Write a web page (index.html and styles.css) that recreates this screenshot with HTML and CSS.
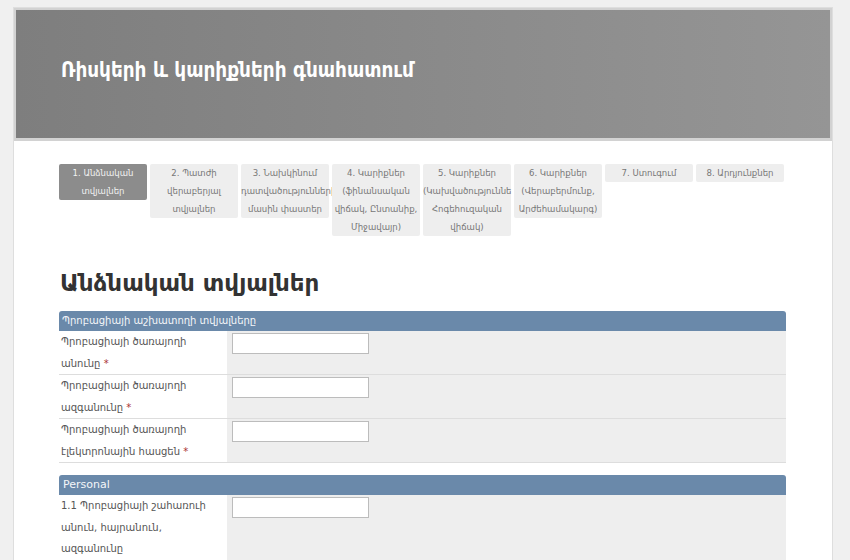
FILE: index.html
```html
<!DOCTYPE html>
<html lang="hy">
<head>
    <meta charset="UTF-8">
    <title>Ռիսկերի և կարիքների գնահատում</title>
    <link rel="stylesheet" href="styles.css">
</head>
<body>
    <div class="page">
        <div class="header">
            <h1>Ռիսկերի և կարիքների գնահատում</h1>
        </div>

        <div class="content">
            <ul class="steps">
                <li class="step active">1. Անձնական տվյալներ</li>
                <li class="step">2. Պատժի վերաբերյալ տվյալներ</li>
                <li class="step">3. Նախկինում դատվածությունների մասին փաստեր</li>
                <li class="step">4. Կարիքներ (ֆինանսական վիճակ, Ընտանիք, Միջավայր)</li>
                <li class="step">5. Կարիքներ (Կախվածություննե Հոգեհուզական վիճակ)</li>
                <li class="step">6. Կարիքներ (Վերաբերմունք, Արժեհամակարգ)</li>
                <li class="step">7. Ստուգում</li>
                <li class="step">8. Արդյունքներ</li>
            </ul>

            <h2 class="page-title">Անձնական տվյալներ</h2>

            <div class="group">
                <div class="group-title">Պրոբացիայի աշխատողի տվյալները</div>
                <div class="row">
                    <label class="row-label">Պրոբացիայի ծառայողի անունը <span class="req">*</span></label>
                    <div class="row-field"><input type="text" class="text-input"></div>
                </div>
                <div class="row">
                    <label class="row-label">Պրոբացիայի ծառայողի ազգանունը <span class="req">*</span></label>
                    <div class="row-field"><input type="text" class="text-input"></div>
                </div>
                <div class="row">
                    <label class="row-label">Պրոբացիայի ծառայողի էլեկտրոնային հասցեն <span class="req">*</span></label>
                    <div class="row-field"><input type="text" class="text-input"></div>
                </div>
            </div>

            <div class="group">
                <div class="group-title latin">Personal</div>
                <div class="row">
                    <label class="row-label">1.1 Պրոբացիայի շահառուի անուն, հայրանուն, ազգանունը</label>
                    <div class="row-field"><input type="text" class="text-input"></div>
                </div>
            </div>
        </div>
    </div>
</body>
</html>
```

FILE: styles.css
```css
body {
    margin: 0;
    background-color: #f0f0f0;
    font-family: 'DejaVu Sans', sans-serif;
    color: #555;
}

.page {
    width: 818px;
    margin: 7px 0 0 13px;
    background: #fff;
    border: 1px solid #dedede;
    min-height: 600px;
}

.header {
    height: 128px;
    border: 2px solid #d2d2d2;
    border-bottom-width: 3px;
    background: linear-gradient(to right, #7e7e7e, #959595);
    display: flex;
    align-items: center;
    padding-left: 45px;
}

.header h1 {
    margin: 0 0 8px 0;
    font-family: 'DejaVu Sans Condensed', 'DejaVu Sans', sans-serif;
    font-size: 20.5px;
    font-weight: bold;
    color: #fff;
}

.content {
    padding: 23px 46px 0 45px;
}

.steps {
    list-style: none;
    margin: 0;
    padding: 0;
    display: flex;
    align-items: flex-start;
    gap: 3px;
}

.step {
    width: 88px;
    flex: none;
    background: #eeeeee;
    color: #777;
    font-family: 'DejaVu Sans Condensed', 'DejaVu Sans', sans-serif;
    font-size: 9.5px;
    line-height: 18px;
    text-align: center;
    border-radius: 2px;
}

.step.active {
    background: #8c8c8c;
    color: #f2f2f2;
}

.page-title {
    margin: 32px 0 13px 1px;
    font-size: 23px;
    font-weight: bold;
    color: #333;
    line-height: 30px;
}

.group {
    margin-bottom: 12px;
}

.group-title {
    background: #6a89aa;
    color: #f4f6f9;
    font-size: 10px;
    line-height: 20px;
    height: 20px;
    padding-left: 3px;
    border-radius: 3px 3px 0 0;
}

.group-title.latin {
    font-size: 11px;
    padding-left: 4px;
}

.row {
    display: flex;
    border-bottom: 1px solid #dddddd;
}

.row-label {
    width: 166px;
    flex: none;
    padding-left: 2px;
    font-size: 10px;
    line-height: 21.5px;
    color: #555;
}

.req {
    color: #a33;
}

.row-field {
    flex: 1;
    background: #eeeeee;
    padding: 2px 5px;
}

.text-input {
    display: block;
    width: 135px;
    height: 19px;
    padding: 0;
    margin: 0;
    border: 1px solid #bcbcbc;
    background: #fff;
}
```
